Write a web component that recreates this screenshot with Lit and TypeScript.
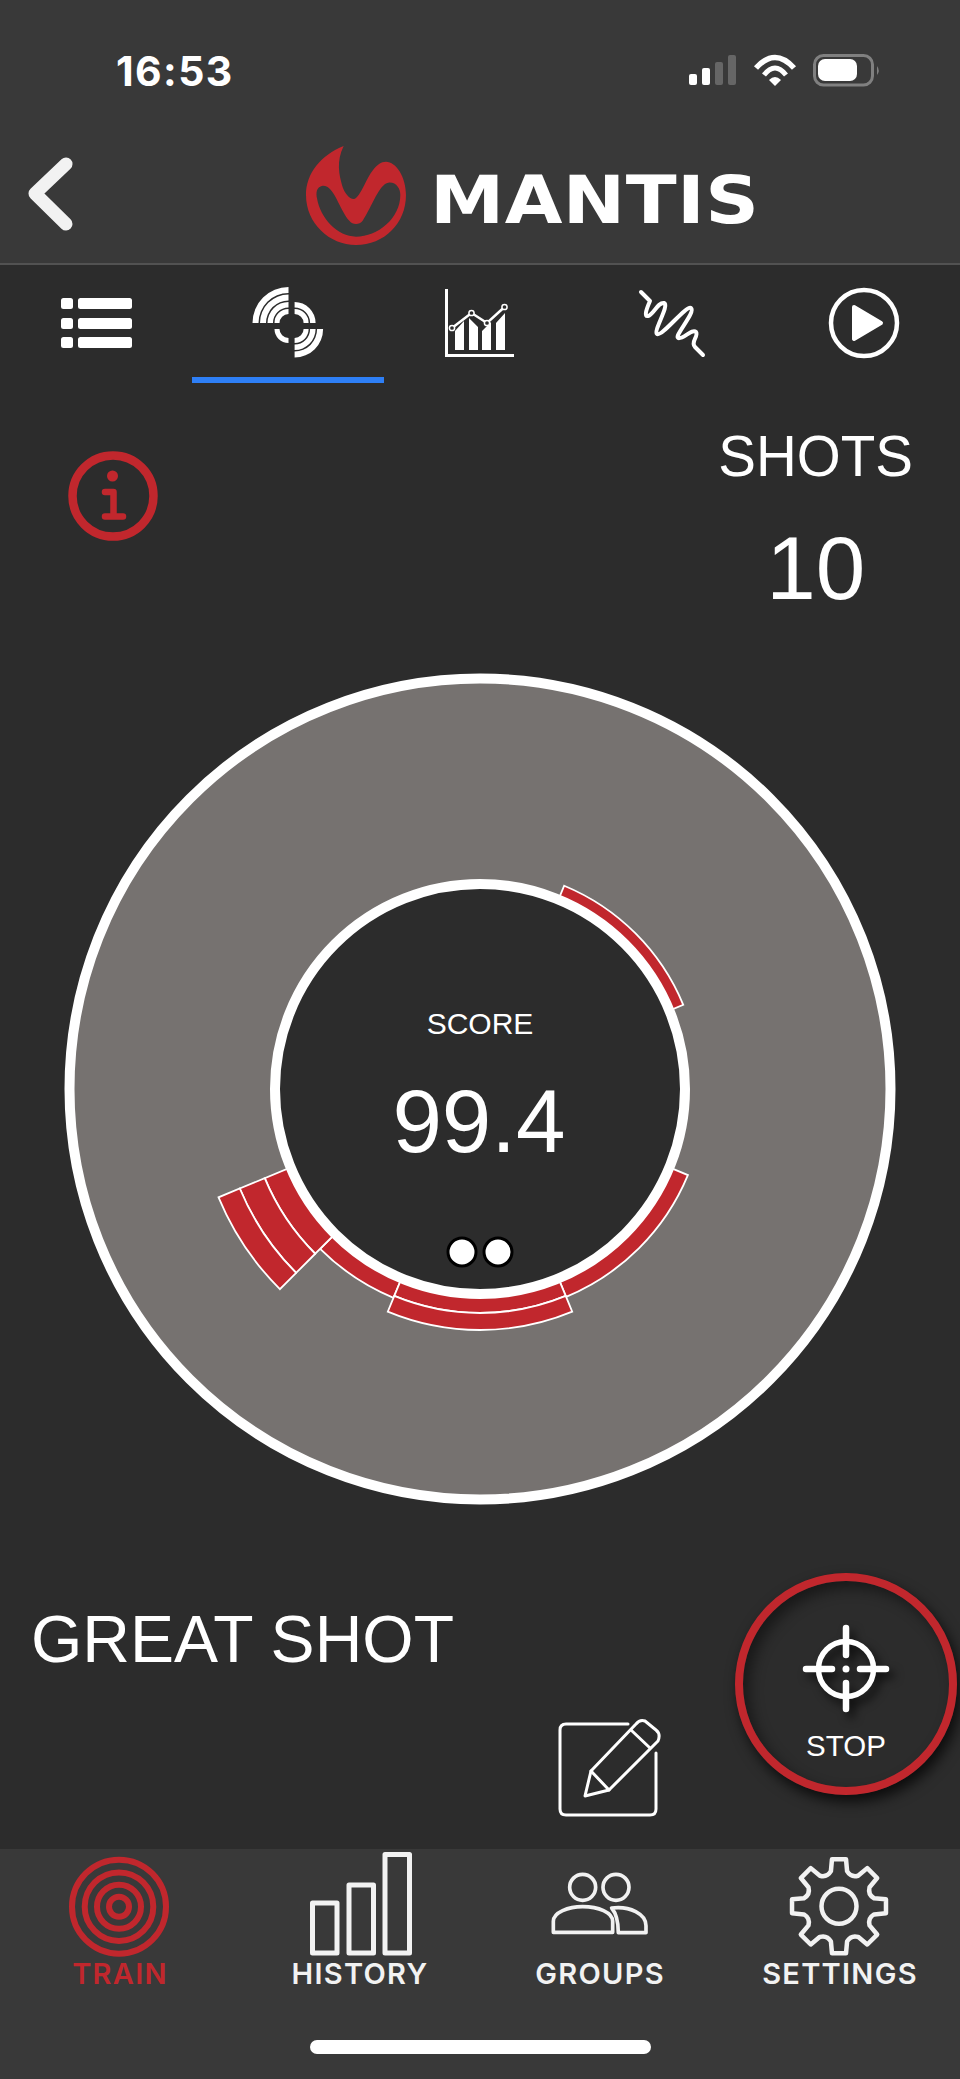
import { LitElement, css, html, svg } from 'lit';
import { customElement } from 'lit/decorators.js';
import { classMap } from 'lit/directives/class-map.js';

const RED = '#c1272d';

/** Ring sector path, angles in degrees clockwise from 12 o'clock. */
function sector(cx: number, cy: number, r0: number, r1: number, a0: number, a1: number) {
  const pt = (r: number, a: number) => {
    const t = (a * Math.PI) / 180;
    return `${(cx + r * Math.sin(t)).toFixed(2)} ${(cy - r * Math.cos(t)).toFixed(2)}`;
  };
  return `M${pt(r0, a0)} L${pt(r1, a0)} A${r1} ${r1} 0 0 1 ${pt(r1, a1)} L${pt(r0, a1)} A${r0} ${r0} 0 0 0 ${pt(r0, a0)} Z`;
}

function gearPath(cx: number, cy: number) {
  const outer = 47.5;
  const root = 36;
  const pt = (r: number, a: number) => {
    const t = (a * Math.PI) / 180;
    return `${(cx + r * Math.sin(t)).toFixed(2)} ${(cy - r * Math.cos(t)).toFixed(2)}`;
  };
  let d = '';
  for (let i = 0; i < 8; i++) {
    const a = i * 45;
    d += `${i === 0 ? 'M' : 'L'}${pt(root, a - 13)} L${pt(outer, a - 8.5)} L${pt(outer, a + 8.5)} L${pt(root, a + 13)} Q${pt(root - 5, a + 22.5)} ${pt(root, a + 32)} `;
  }
  return d + 'Z';
}

const SHOT_SECTORS = [
  { from: 22.5, to: 67.5, radii: [205, 220] },
  { from: 112.5, to: 157.5, radii: [205, 225] },
  { from: 202.5, to: 225, radii: [205, 226] },
  { from: 157.5, to: 202.5, radii: [205, 224, 241] },
  { from: 225, to: 247.5, radii: [205, 233, 260, 283] },
];

const TARGET_TAB = [
  { cx: 288.5, cy: 323, from: 270, to: 360, bands: [[9, 14], [15.5, 21], [22.5, 28.5], [30, 36]] },
  { cx: 294.6, cy: 323, from: 0, to: 90, bands: [[9, 14], [15.5, 21]] },
  { cx: 294.6, cy: 329, from: 90, to: 180, bands: [[9, 14], [15.5, 21], [22.5, 28.5]] },
  { cx: 288.5, cy: 329, from: 180, to: 270, bands: [[9, 14]] },
];

@customElement('app-root')
export class AppRoot extends LitElement {
  static styles = css`
    :host {
      display: flex;
      flex-direction: column;
      width: 960px;
      height: 2079px;
      background: #2c2c2c;
      color: #fff;
      font-family: 'Liberation Sans', Arial, sans-serif;
      overflow: hidden;
    }

    svg {
      display: block;
    }

    .header {
      box-sizing: border-box;
      height: 265px;
      background: #393939;
      border-bottom: 2px solid #525252;
      flex: none;
    }

    .status {
      display: flex;
      align-items: center;
      justify-content: space-between;
      height: 50px;
      padding: 46px 75px 0 116px;
    }

    .time {
      font-family: Inter, 'Liberation Sans', sans-serif;
      font-weight: 700;
      font-size: 41px;
      letter-spacing: 1.4px;
      line-height: 50px;
    }

    .brand {
      display: flex;
      align-items: center;
      height: 120px;
      margin-top: 37px;
    }

    .back {
      margin-left: 20px;
      margin-right: 229px;
    }

    .logo-mark {
      margin-top: 6px;
    }

    .wordmark {
      display: inline-block;
      margin-left: 21px;
      margin-top: 16px;
      font-family: 'DejaVu Sans', sans-serif;
      font-weight: 700;
      font-size: 66px;
      line-height: 70px;
      letter-spacing: 0.4px;
      white-space: nowrap;
      transform: scaleX(1.13);
      transform-origin: left center;
    }

    .tabs {
      display: grid;
      grid-template-columns: repeat(5, 192px);
      height: 119px;
      flex: none;
    }

    .tab {
      box-sizing: border-box;
      height: 118px;
      border-bottom: 6px solid transparent;
    }

    .tab.active {
      border-bottom-color: #2e7ff6;
    }

    .main {
      flex: 1;
      display: flex;
      flex-direction: column;
      min-height: 0;
    }

    .stats {
      display: flex;
      justify-content: space-between;
      height: 285px;
      padding: 0 47px 0 65px;
      flex: none;
    }

    .info {
      margin-top: 64px;
    }

    .shots {
      display: flex;
      flex-direction: column;
      align-items: center;
    }

    .shots-label {
      font-size: 56.5px;
      line-height: 64px;
      margin-top: 41px;
    }

    .shots-value {
      font-size: 89px;
      line-height: 100px;
      margin-top: 29px;
    }

    .gauge-text {
      fill: #fff;
      text-anchor: middle;
    }

    .footer {
      flex: 1;
      display: flex;
      min-height: 0;
    }

    .verdict {
      margin: 93px auto 0 31px;
      font-size: 66px;
      line-height: 74px;
      white-space: nowrap;
    }

    .edit {
      margin-top: 207px;
      margin-right: 72px;
    }

    .stop {
      box-sizing: border-box;
      flex: none;
      width: 222px;
      height: 222px;
      margin: 64px 3px 0 0;
      border: 8px solid ${css([RED] as unknown as string)};
      border-radius: 50%;
      box-shadow: 4px 7px 14px rgba(0, 0, 0, 0.75), inset 6px 7px 14px rgba(0, 0, 0, 0.45);
      display: flex;
      flex-direction: column;
      align-items: center;
      padding-top: 40px;
    }

    .crosshair {
      filter: drop-shadow(5px 6px 5px rgba(0, 0, 0, 0.7));
    }

    .stop-label {
      font-size: 29.5px;
      line-height: 34px;
      margin-top: 12px;
    }

    .nav {
      flex: none;
      height: 230px;
      background: #393939;
      display: flex;
      flex-direction: column;
      align-items: center;
    }

    .nav-items {
      display: grid;
      grid-template-columns: repeat(4, 240px);
      width: 960px;
    }

    .nav-item {
      display: flex;
      flex-direction: column;
      align-items: center;
      color: #f2f2f2;
      font-family: Inter, 'Liberation Sans', sans-serif;
      font-weight: 600;
      font-size: 29px;
      letter-spacing: 1.3px;
      line-height: 28px;
    }

    .nav-item.active {
      color: ${css([RED] as unknown as string)};
    }

    .nav-label {
      margin-top: 1px;
    }

    .home-bar {
      width: 341px;
      height: 14px;
      border-radius: 7px;
      background: #fff;
      margin-top: 52px;
    }
  `;

  private renderStatusIcons() {
    return html`
      <svg width="200" height="40" viewBox="685 52 200 40">
        <rect x="689" y="75" width="8" height="11" rx="2" fill="#fff" />
        <rect x="702" y="69" width="8" height="17" rx="2" fill="#fff" />
        <rect x="715" y="63" width="8" height="23" rx="2" fill="#666" />
        <rect x="728" y="56" width="8" height="30" rx="2" fill="#666" />
        <g fill="none" stroke="#fff">
          <path d="M756 69 Q775 48 794 69" stroke-width="5.5" />
          <path d="M764 76 Q775 62 786 76" stroke-width="5" />
        </g>
        <path d="M769 81 Q775 75 781 81 L775 87 Z" fill="#fff" />
        <rect x="814.5" y="56.5" width="58" height="29.5" rx="9" fill="none" stroke="#808080" stroke-width="3" />
        <rect x="818" y="60" width="39" height="22" rx="7" fill="#fff" />
        <path d="M877 67 Q880.5 71.5 877 76 Z" fill="#808080" />
      </svg>
    `;
  }

  private renderLogoMark() {
    return html`
      <svg class="logo-mark" width="106" height="104" viewBox="302 144 106 104">
        <g transform="translate(280 130) scale(0.3333)">
          <path
            fill=${RED}
            fill-rule="evenodd"
            d="M188 48 C120 75 75 130 75 195 C75 280 145 345 225 345 C310 345 375 280 375 195 C375 140 345 95 315 95 C285 95 265 135 250 165 C240 185 228 207 218 207 C205 207 190 190 183 165 C175 135 165 95 188 48 Z
               M125 167 C105 170 105 190 108 205 C118 265 170 320 225 320 C290 320 358 265 358 195 C358 175 345 155 322 158 C295 162 275 225 245 272 C235 285 215 285 205 272 C175 240 160 165 125 167 Z"
          />
        </g>
      </svg>
    `;
  }

  private renderTabIcon(index: number) {
    const x = index * 192;
    const box = `${x} 265 192 112`;
    switch (index) {
      case 0:
        return html`<svg width="192" height="112" viewBox=${box} fill="#fff">
          ${[298, 318, 337].map(
            (y) => svg`
              <rect x="61" y=${y} width="12" height="11" rx="2.5" />
              <rect x="78" y=${y} width="54" height="11" rx="2.5" />
            `,
          )}
        </svg>`;
      case 1:
        return html`<svg width="192" height="112" viewBox=${box} fill="#fff">
          ${TARGET_TAB.map((q) =>
            q.bands.map(([r0, r1]) => svg`<path d=${sector(q.cx, q.cy, r0, r1, q.from, q.to)} />`),
          )}
        </svg>`;
      case 2:
        return html`<svg width="192" height="112" viewBox=${box}>
          <path d="M446.5 289 V355.5 H514" fill="none" stroke="#fff" stroke-width="3" />
          <path
            fill="#fff"
            d="M455 331 L464 321 V350 H455 Z M469 318 L478 327 V350 H469 Z M482 331 L491 322 V350 H482 Z M496 323 L505 313 V350 H496 Z"
          />
          <path d="M452 328 L471.5 313 L487 323 L504.5 307" fill="none" stroke="#fff" stroke-width="2.5" />
          ${[
            [452, 328],
            [471.5, 313],
            [487, 323],
            [504.5, 307],
          ].map(([cx, cy]) => svg`<circle cx=${cx} cy=${cy} r="2.6" fill="#2c2c2c" stroke="#fff" stroke-width="1.5" />`)}
        </svg>`;
      case 3:
        return html`<svg width="192" height="112" viewBox=${box}>
          <path
            fill="none"
            stroke="#fff"
            stroke-width="4"
            stroke-linecap="round"
            stroke-linejoin="round"
            d="M641 292 L650 301 C646 310 644 317 648 316 C653 315 658 302 664 303 C670 305 653 331 657 334 C662 337 686 305 691 308 C696 312 674 336 678 338 C683 340 692 328 696 332 C699 336 690 342 695 347 L703 355"
          />
        </svg>`;
      default:
        return html`<svg width="192" height="112" viewBox=${box}>
          <circle cx="864" cy="323" r="33" fill="none" stroke="#fff" stroke-width="4.5" />
          <path d="M854 307 L881 323 L854 339 Z" fill="#fff" stroke="#fff" stroke-width="4" stroke-linejoin="round" />
        </svg>`;
    }
  }

  private renderGauge() {
    return html`
      <svg width="960" height="840" viewBox="0 669 960 840">
        <circle cx="480" cy="1089" r="410.5" fill="#767270" stroke="#fff" stroke-width="10" />
        ${SHOT_SECTORS.map((s) =>
          s.radii.slice(1).map(
            (r, i) => svg`
              <path d=${sector(480, 1089, s.radii[i], r, s.from, s.to)} fill=${RED} stroke="#fff" stroke-width="1.8" />
            `,
          ),
        )}
        <circle cx="480" cy="1089" r="205" fill="#2c2c2c" stroke="#fff" stroke-width="10" />
        <text class="gauge-text" x="480" y="1034" font-size="30">SCORE</text>
        <text class="gauge-text" x="479" y="1152" font-size="89">99.4</text>
        <circle cx="462" cy="1252" r="14" fill="#fff" stroke="#000" stroke-width="3" />
        <circle cx="498" cy="1252" r="14" fill="#fff" stroke="#000" stroke-width="3" />
      </svg>
    `;
  }

  private renderNavIcon(index: number) {
    const x = index * 240 + 60;
    const box = `${x} 1850 120 110`;
    const white = '#f2f2f2';
    switch (index) {
      case 0:
        return html`<svg width="120" height="110" viewBox=${box}>
          ${[47, 34.3, 22, 10].map(
            (r) => svg`<circle cx="119" cy="1907.7" r=${r} fill="none" stroke=${RED} stroke-width="6" />`,
          )}
        </svg>`;
      case 1:
        return html`<svg width="120" height="110" viewBox=${box}>
          <g fill="none" stroke=${white} stroke-width="5" stroke-linejoin="round">
            <rect x="312.5" y="1904" width="24.5" height="50" />
            <rect x="349" y="1886" width="24.5" height="68" />
            <rect x="385" y="1855.5" width="24.5" height="98.5" />
          </g>
        </svg>`;
      case 2:
        return html`<svg width="120" height="110" viewBox=${box}>
          <g transform="translate(520 1835) scale(0.3333)" fill="none" stroke=${white} stroke-width="11" stroke-linejoin="round">
            <circle cx="188" cy="160" r="39" />
            <circle cx="288" cy="160" r="39" />
            <path d="M100 295 L100 262 C100 235 145 218 188 218 C235 218 278 235 278 262 L278 295 Z" />
            <path d="M275 222 C330 215 378 240 378 275 L378 296 L295 296 C295 265 290 240 275 222 Z" />
          </g>
        </svg>`;
      default:
        return html`<svg width="120" height="110" viewBox=${box}>
          <path d=${gearPath(839, 1907.3)} fill="none" stroke=${white} stroke-width="4.5" stroke-linejoin="round" />
          <circle cx="839" cy="1907.3" r="17.5" fill="none" stroke=${white} stroke-width="4.5" />
        </svg>`;
    }
  }

  render() {
    const navItems = ['TRAIN', 'HISTORY', 'GROUPS', 'SETTINGS'];

    return html`
      <div class="header">
        <div class="status">
          <span class="time">16:53</span>
          ${this.renderStatusIcons()}
        </div>
        <div class="brand">
          <svg class="back" width="54" height="80" viewBox="20 153 54 80">
            <path d="M66 164 L35 193.5 L66 224" fill="none" stroke="#f2f2f2" stroke-width="13" stroke-linecap="round" stroke-linejoin="round" />
          </svg>
          ${this.renderLogoMark()}
          <span class="wordmark">MANTIS</span>
        </div>
      </div>

      <div class="tabs">
        ${[0, 1, 2, 3, 4].map(
          (i) => html`<div class=${classMap({ tab: true, active: i === 1 })}>${this.renderTabIcon(i)}</div>`,
        )}
      </div>

      <div class="main">
        <div class="stats">
          <svg class="info" width="96" height="96" viewBox="65 448 96 96">
            <circle cx="113" cy="496" r="40.5" fill="none" stroke=${RED} stroke-width="8.5" />
            <circle cx="112.5" cy="476" r="5.5" fill=${RED} />
            <path d="M105 492 H113.5 V516 M105 516.5 H123" fill="none" stroke=${RED} stroke-width="6.5" stroke-linecap="round" stroke-linejoin="round" />
          </svg>
          <div class="shots">
            <div class="shots-label">SHOTS</div>
            <div class="shots-value">10</div>
          </div>
        </div>

        ${this.renderGauge()}

        <div class="footer">
          <div class="verdict">GREAT SHOT</div>
          <svg class="edit" width="108" height="102" viewBox="555 1716 108 102">
            <g fill="none" stroke="#fff" stroke-width="3" stroke-linecap="round" stroke-linejoin="round">
              <path d="M628 1724 H566 Q560 1724 560 1730 V1809 Q560 1815 566 1815 H650 Q656 1815 656 1809 V1753" />
              <path d="M585 1796 L591 1771 L636 1724 Q640 1719 645 1721 L656 1730 Q661 1734 658 1741 L609 1790 Z" />
              <path d="M591 1771 L609 1790 M631 1730 L650 1748" />
            </g>
          </svg>
          <div class="stop">
            <svg class="crosshair" width="96" height="96" viewBox="799 1621 96 96">
              <g fill="none" stroke="#fff" stroke-linecap="round">
                <circle cx="847" cy="1669" r="27.5" stroke-width="5.5" />
                <path d="M847 1628 V1655 M847 1683 V1709 M807 1669 H833 M861 1669 H887" stroke-width="6.5" />
              </g>
              <circle cx="847" cy="1669" r="3.5" fill="#fff" />
            </svg>
            <div class="stop-label">STOP</div>
          </div>
        </div>
      </div>

      <div class="nav">
        <div class="nav-items">
          ${navItems.map(
            (label, i) => html`
              <div class=${classMap({ 'nav-item': true, active: i === 0 })}>
                ${this.renderNavIcon(i)}
                <div class="nav-label">${label}</div>
              </div>
            `,
          )}
        </div>
        <div class="home-bar"></div>
      </div>
    `;
  }
}
